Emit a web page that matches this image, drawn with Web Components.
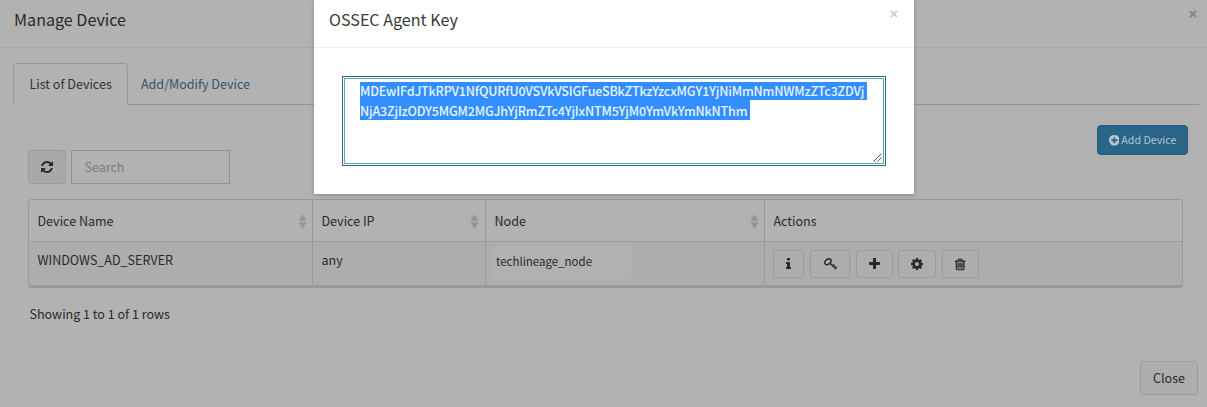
<!DOCTYPE html>
<html lang="en">
<head>
<meta charset="utf-8">
<title>Manage Device</title>
<style>
body{margin:0;background:#b2b2b2;overflow:hidden;color:#292929;font:12.53px/20px "Noto Sans CJK SC","Noto Sans",sans-serif}
</style>
</head>
<body>
<manage-device></manage-device>
<script>
const ICONS={
refresh:[1536,'M1511 1056q0 5-1 7-64 268-268 434.5t-478 166.5q-146 0-282.5-55t-243.5-157l-129 129q-19 19-45 19t-45-19-19-45v-448q0-26 19-45t45-19h448q26 0 45 19t19 45-19 45l-137 137q71 66 161 102t187 36q134 0 250-65t186-179q11-17 53-117 8-23 30-23h192q13 0 22.5 9.5t9.5 22.5zm25-800v448q0 26-19 45t-45 19h-448q-26 0-45-19t-19-45 19-45l138-138q-148-137-349-137-134 0-250 65t-186 179q-11 17-53 117-8 23-30 23h-199q-13 0-22.5-9.5t-9.5-22.5v-7q65-268 270-434.5t480-166.5q146 0 284 55.5t245 156.5l130-129q19-19 45-19t45 19 19 45z'],
plus:[1408,'M1408 736v192q0 40-28 68t-68 28h-416v416q0 40-28 68t-68 28h-192q-40 0-68-28t-28-68v-416h-416q-40 0-68-28t-28-68v-192q0-40 28-68t68-28h416v-416q0-40 28-68t68-28h192q40 0 68 28t28 68v416h416q40 0 68 28t28 68z'],
info:[640,'M640 1344v128q0 26-19 45t-45 19h-512q-26 0-45-19t-19-45v-128q0-26 19-45t45-19h64v-384h-64q-26 0-45-19t-19-45v-128q0-26 19-45t45-19h384q26 0 45 19t19 45v576h64q26 0 45 19t19 45zm-128-1152v192q0 26-19 45t-45 19h-256q-26 0-45-19t-19-45v-192q0-26 19-45t45-19h256q26 0 45 19t19 45z'],
cog:[1536,'M1024 896q0-106-75-181t-181-75-181 75-75 181 75 181 181 75 181-75 75-181zm512-109v222q0 12-8 23t-20 13l-185 28q-19 54-39 91 35 50 107 138 10 12 10 25t-9 23q-27 37-99 108t-94 71q-12 0-26-9l-138-108q-44 23-91 38-16 136-29 186-7 28-36 28h-222q-14 0-24.5-8.5t-11.5-21.5l-28-184q-49-16-90-37l-141 107q-10 9-25 9-14 0-25-11-126-114-165-168-7-10-7-23 0-12 8-23 15-21 51-66.5t54-70.5q-27-50-41-99l-183-27q-13-2-21-12.5t-8-23.5v-222q0-12 8-23t19-13l186-28q14-46 39-92-40-57-107-138-10-12-10-24 0-10 9-23 26-36 98.5-107.500t94.5-71.500q13 0 26 10l138 107q44-23 91-38 16-136 29-186 7-28 36-28h222q14 0 24.5 8.500t11.500 21.500l28 184q49 16 90 37l142-107q9-9 24-9 13 0 25 10 129 119 165 170 7 8 7 22 0 12-8 23-15 21-51 66.500t-54 70.500q26 50 41 98l183 28q13 2 21 12.500t8 23.500z'],
trash:[1408,'M512 736v576q0 14-9 23t-23 9h-64q-14 0-23-9t-9-23v-576q0-14 9-23t23-9h64q14 0 23 9t9 23zm256 0v576q0 14-9 23t-23 9h-64q-14 0-23-9t-9-23v-576q0-14 9-23t23-9h64q14 0 23 9t9 23zm256 0v576q0 14-9 23t-23 9h-64q-14 0-23-9t-9-23v-576q0-14 9-23t23-9h64q14 0 23 9t9 23zm128 724v-948h-896v948q0 22 7 40.500t14.500 27 10.500 8.500h832q3 0 10.500-8.500t14.500-27 7-40.500zm-672-1076h448l-48-117q-7-9-17-11h-317q-10 2-17 11zm928 32v64q0 14-9 23t-23 9h-96v948q0 83-47 143.500t-113 60.500h-832q-66 0-113-58.500t-47-141.500v-952h-96q-14 0-23-9t-9-23v-64q0-14 9-23t23-9h309l70-167q15-37 54-63t79-26h320q40 0 79 26t54 63l70 167h309q14 0 23 9t9 23z'],
'plus-circle':[1536,'M1216 960v-128q0-26-19-45t-45-19h-256v-256q0-26-19-45t-45-19h-128q-26 0-45 19t-19 45v256h-256q-26 0-45 19t-19 45v128q0 26 19 45t45 19h256v256q0 26 19 45t45 19h128q26 0 45-19t19-45v-256h256q26 0 45-19t19-45zm320-64q0 209-103 385.500t-279.500 279.500-385.500 103-385.500-103-279.500-279.500-103-385.500 103-385.500 279.500-279.500 385.500-103 385.500 103 279.500 279.500 103 385.500z']
};
function define(name,html,after){
  customElements.define(name,class extends HTMLElement{
    connectedCallback(){
      if(this.shadowRoot)return;
      const t=document.createElement('template');
      t.innerHTML=html;
      this.attachShadow({mode:'open'}).append(t.content.cloneNode(true));
      if(after)after(this,this.shadowRoot);
    }
  });
}
define('ui-icon',`<style>:host{display:block;flex:none}svg{display:block;fill:currentColor}:host([name=trash]) svg{stroke:currentColor;stroke-width:60px}</style><div></div>`,(el,root)=>{
  const name=el.getAttribute('name'),size=+(el.getAttribute('size')||14),box=root.querySelector('div');
  if(name==='key'){
    box.innerHTML='<svg width="15" height="14" viewBox="0 0 15 14"><g style="fill:none;stroke:currentColor"><ellipse cx="4.900" cy="4.700" rx="3.500" ry="2.400" transform="rotate(-38 4.900 4.700)" stroke-width="1.500"/><path d="M7 6.400L13.300 11.900M9.800 9.300l1.600-1.800M12 11.200l1.600-1.800" stroke-width="1.500"/></g></svg>';
  }else{
    const [w,d]=ICONS[name];
    box.innerHTML=`<svg width="${size*w/1792}" height="${size}" viewBox="0 0 ${w} 1792"><path d="${d}"/></svg>`;
  }
});
define('ui-button',`<style>
:host{display:flex;align-items:center;justify-content:center;box-sizing:border-box;border:1px solid #9b9b9b;border-radius:3px;background:#aeaeae;color:#292929}
:host([primary]){background:#2a6487;border-color:#255a79;border-radius:4px;color:#b5c8d2;gap:2px;font-size:10.700px}
</style><slot></slot>`);
define('ui-close',`<style>:host{display:block;width:8px;height:8px;color:#858585}svg{display:block}</style>
<svg width="8" height="8" viewBox="0 0 8 8"><path d="M1 1L7 7M7 1L1 7" stroke="currentColor" stroke-width="1.9"/></svg>`);
define('modal-header',`<style>
:host{display:flex;box-sizing:border-box;height:48px;padding:9px 10px 0 14px;border-bottom:1px solid #a8a8a8;justify-content:space-between;font-size:16.100px;line-height:20px}
ui-close{margin-top:1px}
:host([light]){border-color:#efefef;padding-left:15px;padding-right:16px;color:#383838}
:host([light]) ui-close{color:#ccc}
</style><slot></slot><ui-close></ui-close>`);
define('tab-bar',`<style>
:host{display:flex;margin:15px 8px 0 13px;height:42px;line-height:40px}
.on{box-sizing:border-box;width:115px;border:1px solid #999;border-bottom:0;border-radius:4px 4px 0 0;padding-left:15.500px;color:#333}
.off{flex:1;box-sizing:border-box;border-bottom:1px solid #949494;padding:1px 0 0 13px;color:#34536d}
</style><div class="on"><slot name="active"></slot></div><div class="off"><slot></slot></div>`);
define('search-box',`<style>
:host{display:block;box-sizing:border-box;width:159px;height:34px;border:1px solid #919191;padding-left:12.500px;line-height:32px;color:#7c7c7c}
</style><slot></slot>`);
define('sort-arrows',`<style>:host{display:block}svg{display:block}</style>
<svg width="9" height="15" viewBox="0 0 9 15"><path d="M4.500 0L8.500 6.800H.5zM4.500 15L8.500 8.200H.5z" fill="#949494"/></svg>`);
define('device-table',`<style>
:host{display:grid;box-sizing:border-box;grid-template-columns:283px 172px 278px 1fr;grid-template-rows:41px 43px;gap:1px;width:1155px;height:89px;border:1px solid #999;border-bottom-width:2px;border-radius:4px;background:#999;overflow:hidden}
div{display:flex;box-sizing:border-box;padding:0 5px 0 8.500px;background:#b2b2b2}
.h{align-items:center;justify-content:space-between}
.h sort-arrows{margin-top:2px}
.h:nth-child(3){padding-right:6px}
.r{background:#adadad;padding-top:8px}
.node{font-size:11.500px;padding-left:6px;padding-top:5px}
.node span{background:#b1b1b1;width:139px;height:32px;line-height:29px;padding-left:4px;box-sizing:border-box}
.actions{padding-left:8px}
ui-button{height:28px}
</style>
<div class="h"><span>Device Name</span><sort-arrows></sort-arrows></div>
<div class="h"><span>Device IP</span><sort-arrows></sort-arrows></div>
<div class="h"><span>Node</span><sort-arrows></sort-arrows></div>
<div class="h"><span>Actions</span></div>
<div class="r">WINDOWS_AD_SERVER</div>
<div class="r">any</div>
<div class="r node"><span>techlineage_node</span></div>
<div class="r actions">
<ui-button style="width:31px"><ui-icon name="info"></ui-icon></ui-button>
<ui-button style="width:40px;margin-left:6px"><ui-icon name="key"></ui-icon></ui-button>
<ui-button style="width:37px;margin-left:6px"><ui-icon name="plus"></ui-icon></ui-button>
<ui-button style="width:38px;margin-left:5px"><ui-icon name="cog"></ui-icon></ui-button>
<ui-button style="width:37px;margin-left:6px"><ui-icon name="trash" size="13"></ui-icon></ui-button>
</div>`);
define('agent-key-box',`<style>
:host{display:block;box-sizing:border-box;margin:28px 28px 0;width:544px;height:90px;border:1px solid #28717c;padding:1px}
.in{box-sizing:border-box;height:86px;border:1px solid #6aa5ad;padding:3px 0 0 15px;display:flex;flex-direction:column;align-items:flex-start;position:relative}
span{display:block;background:#338fff;color:#e8f4ff;font-weight:500;letter-spacing:-.175px;height:20px;line-height:18px;white-space:nowrap;padding-right:3px}
span:first-of-type{height:18px}
.two{padding-top:2px;height:18px}
svg{position:absolute;right:1px;bottom:1px}
</style><div class="in"><span class="one">MDEwIFdJTkRPV1NfQURfU0VSVkVSIGFueSBkZTkzYzcxMGY1YjNiMmNmNWMzZTc3ZDVj</span><span class="two">NjA3ZjIzODY5MGM2MGJhYjRmZTc4YjIxNTM5YjM0YmVkYmNkNThm</span>
<svg width="9" height="9" viewBox="0 0 9 9"><path d="M.5 8.500L8.500.5M4.500 8.500L8.500 4.500" stroke="#555" stroke-width="1"/></svg></div>`);
define('key-modal',`<style>
:host{display:block;position:absolute;left:314px;top:0;width:600px;height:194px;background:#fff;box-shadow:0 1px 4px rgba(0,0,0,.25)}
</style><modal-header light>OSSEC Agent Key</modal-header><agent-key-box></agent-key-box>`);
define('manage-device',`<style>
:host{display:block;width:1207px;height:407px;position:relative;overflow:hidden}
.tools{display:flex;margin:20px 19px 0 28px;height:59px;align-items:flex-end}
.tools search-box{margin-left:5px}
.tools .add{margin-left:auto;align-self:flex-start;width:91px;height:30px}
.refresh{width:38px;height:34px;background:#a9a9a9}
device-table{margin:15px 0 0 28px}
.foot{margin:16px 0 0 29.500px}
.end{display:flex;justify-content:flex-end;margin:37px 9px 0 0}
.end ui-button{width:58px;height:34px}
</style>
<modal-header>Manage Device</modal-header>
<tab-bar><span slot="active">List of Devices</span>Add/Modify Device</tab-bar>
<div class="tools"><ui-button class="refresh"><ui-icon name="refresh"></ui-icon></ui-button><search-box>Search</search-box>
<ui-button class="add" primary><ui-icon name="plus-circle" size="12.500"></ui-icon><span>Add Device</span></ui-button></div>
<device-table></device-table>
<div class="foot">Showing 1 to 1 of 1 rows</div>
<div class="end"><ui-button>Close</ui-button></div>
<key-modal></key-modal>`);
</script>
</body>
</html>
